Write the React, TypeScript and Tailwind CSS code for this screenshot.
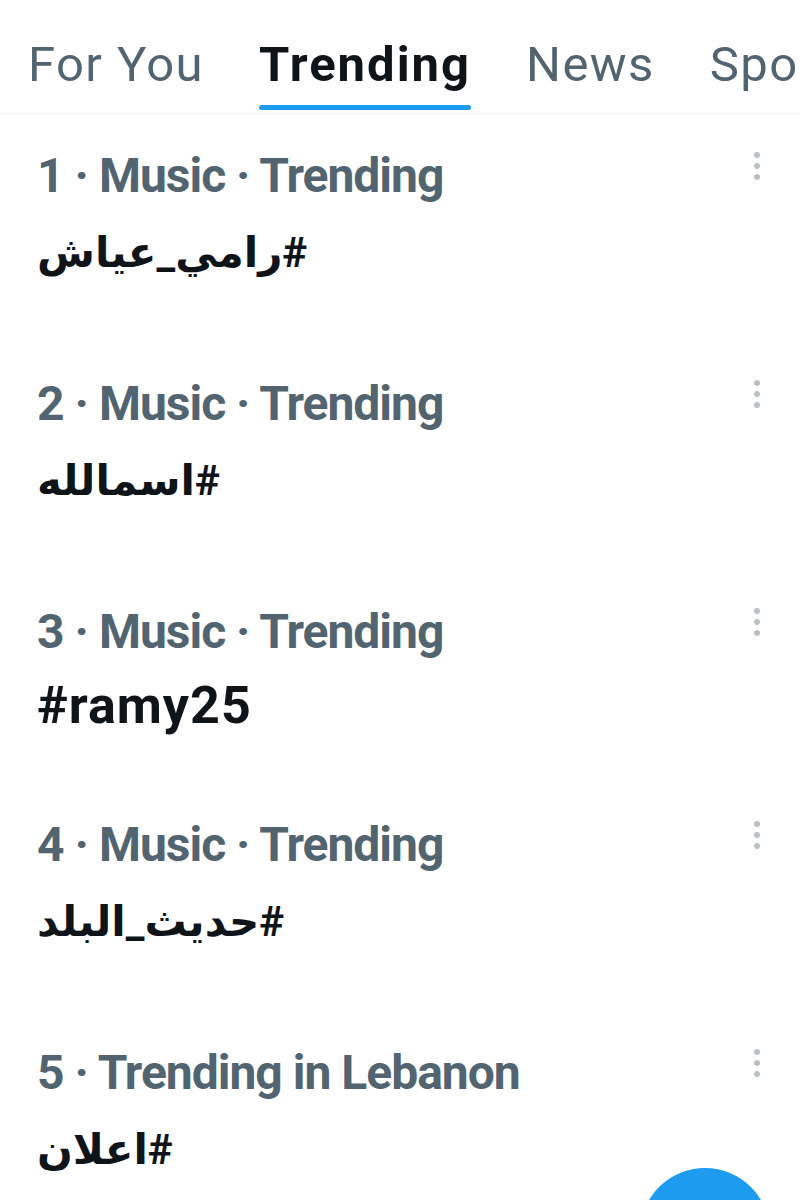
const tabs = [
  { label: "For You", active: false },
  { label: "Trending", active: true },
  { label: "News", active: false },
  { label: "Sports", active: false },
];

const trends = [
  { meta: "1 · Music · Trending", tag: "#رامي_عياش", arabic: true, pb: "pb-[103px]" },
  { meta: "2 · Music · Trending", tag: "#اسمالله", arabic: true, pb: "pb-[103px]" },
  { meta: "3 · Music · Trending", tag: "#ramy25", arabic: false, pb: "pb-[91px]" },
  { meta: "4 · Music · Trending", tag: "#حديث_البلد", arabic: true, pb: "pb-[103px]" },
  { meta: "5 · Trending in Lebanon", tag: "#اعلان", arabic: true, pb: "pb-[103px]" },
];

export default function App() {
  return (
    <div className="relative h-[1200px] w-[800px] overflow-hidden bg-white font-['Roboto','DejaVu_Sans',sans-serif]">
      {/* tab strip */}
      <div className="flex h-[114px] gap-[55px] overflow-hidden whitespace-nowrap border-b border-[#eff3f4] pl-[28px]">
        {tabs.map((t) => (
          <div key={t.label} className="flex shrink-0 flex-col items-center pt-[41px]">
            <span
              className={`text-[49px] leading-[48px] ${
                t.active ? "font-bold tracking-[2px] text-[#0f1419]" : "font-normal tracking-[1.4px] text-[#536471]"
              }`}
            >
              {t.label}
            </span>
            {t.active && <div className="mt-[16px] h-[5px] w-full rounded-full bg-[#1d9bf0]" />}
          </div>
        ))}
      </div>

      {/* trend list */}
      <div className="pt-[38px]">
        {trends.map((t) => (
          <div key={t.meta} className={`flex justify-between pl-[37px] pr-[40px] ${t.pb}`}>
            <div className="min-w-0">
              <div className="text-[48px] font-bold leading-[48px] tracking-[-1px] text-[#536471]">{t.meta}</div>
              <div
                dir="auto"
                className={`text-left font-bold leading-[48px] text-[#0f1419] ${
                  t.arabic ? "mt-[29px] text-[42px]" : "mt-[26px] text-[52px] tracking-[1px]"
                }`}
              >
                {t.tag}
              </div>
            </div>
            <div className="flex flex-col gap-[5px]">
              <span className="h-[6px] w-[6px] rounded-full bg-[#b9c1c6]" />
              <span className="h-[6px] w-[6px] rounded-full bg-[#b9c1c6]" />
              <span className="h-[6px] w-[6px] rounded-full bg-[#b9c1c6]" />
            </div>
          </div>
        ))}
      </div>

      {/* compose button peeking in at the bottom */}
      <div className="absolute left-[640px] top-[1168px] h-[130px] w-[130px] rounded-full bg-[#1d9bf0]" />
    </div>
  );
}
